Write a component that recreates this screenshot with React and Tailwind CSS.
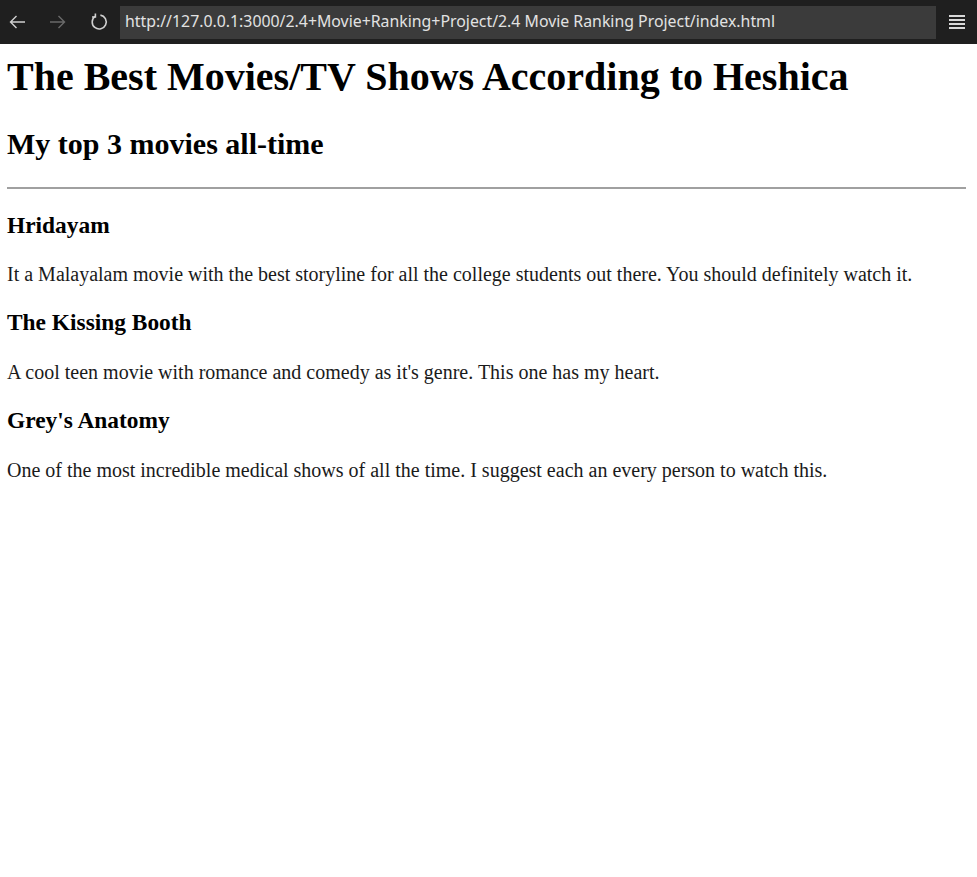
import React from 'react'

const movies = [
  {
    title: 'Hridayam',
    text: 'It a Malayalam movie with the best storyline for all the college students out there. You should definitely watch it.',
  },
  {
    title: 'The Kissing Booth',
    text: "A cool teen movie with romance and comedy as it's genre. This one has my heart.",
  },
  {
    title: "Grey's Anatomy",
    text: 'One of the most incredible medical shows of all the time. I suggest each an every person to watch this.',
  },
]

// browser chrome at the top
const Toolbar = () => (
  <div className="h-[44px] bg-[#1f1f1f] flex items-center">
    <div className="w-[120px] flex items-center shrink-0">
      <svg className="ml-[9px]" width="17" height="14" viewBox="0 0 17 14" fill="none" stroke="#d0d0d0" strokeWidth="1.4">
        <path d="M16 7H1.5M7.5 1L1.5 7l6 6" />
      </svg>
      <svg className="ml-[23px]" width="17" height="14" viewBox="0 0 17 14" fill="none" stroke="#6a6a6a" strokeWidth="1.4">
        <path d="M1 7h14.5M9.5 1l6 6-6 6" />
      </svg>
      <svg className="ml-[24px]" width="18" height="18" viewBox="0 0 18 18" fill="none" stroke="#d0d0d0" strokeWidth="1.6">
        <path d="M5 3.4A7 7 0 1 0 10.4 2.1" />
        <path d="M5.4 0.6v3.4H2" />
      </svg>
    </div>
    <div className="h-[33px] w-[816px] bg-[#3b3b3b] flex items-center pl-[5px] text-[15.85px] text-[#e2e2e2] font-['Noto_Sans',sans-serif] whitespace-nowrap overflow-hidden">
      http://127.0.0.1:3000/2.4+Movie+Ranking+Project/2.4 Movie Ranking Project/index.html
    </div>
    <div className="flex-1 flex justify-center">
      <div className="flex flex-col gap-[2px] w-[16px]">
        <div className="h-[2px] bg-[#d8d8d8]" />
        <div className="h-[2px] bg-[#d8d8d8]" />
        <div className="h-[2px] bg-[#d8d8d8]" />
        <div className="h-[2px] bg-[#d8d8d8]" />
      </div>
    </div>
  </div>
)

function App() {
  return (
    <div className="min-h-screen bg-white">
      <Toolbar />
      <div className="ml-[7px] mr-[11px] pt-[10px] font-['Liberation_Serif',serif] text-[20px] leading-[1.15] text-black">
        <h1 className="text-[40px] font-bold leading-[1.15] mb-[27px]">The Best Movies/TV Shows According to Heshica</h1>
        <h2 className="text-[30px] font-bold leading-[1.15] mb-[25px]">My top 3 movies all-time</h2>
        <hr className="border-0 border-t-2 border-[#a0a0a0] mb-[23px]" />
        {movies.map((m) => (
          <div key={m.title}>
            <h3 className="text-[23.4px] font-bold leading-[1.15] mb-[24.5px]">{m.title}</h3>
            <p className="text-[#1a1a1a] mb-[23.4px]">{m.text}</p>
          </div>
        ))}
      </div>
    </div>
  )
}

export default App
